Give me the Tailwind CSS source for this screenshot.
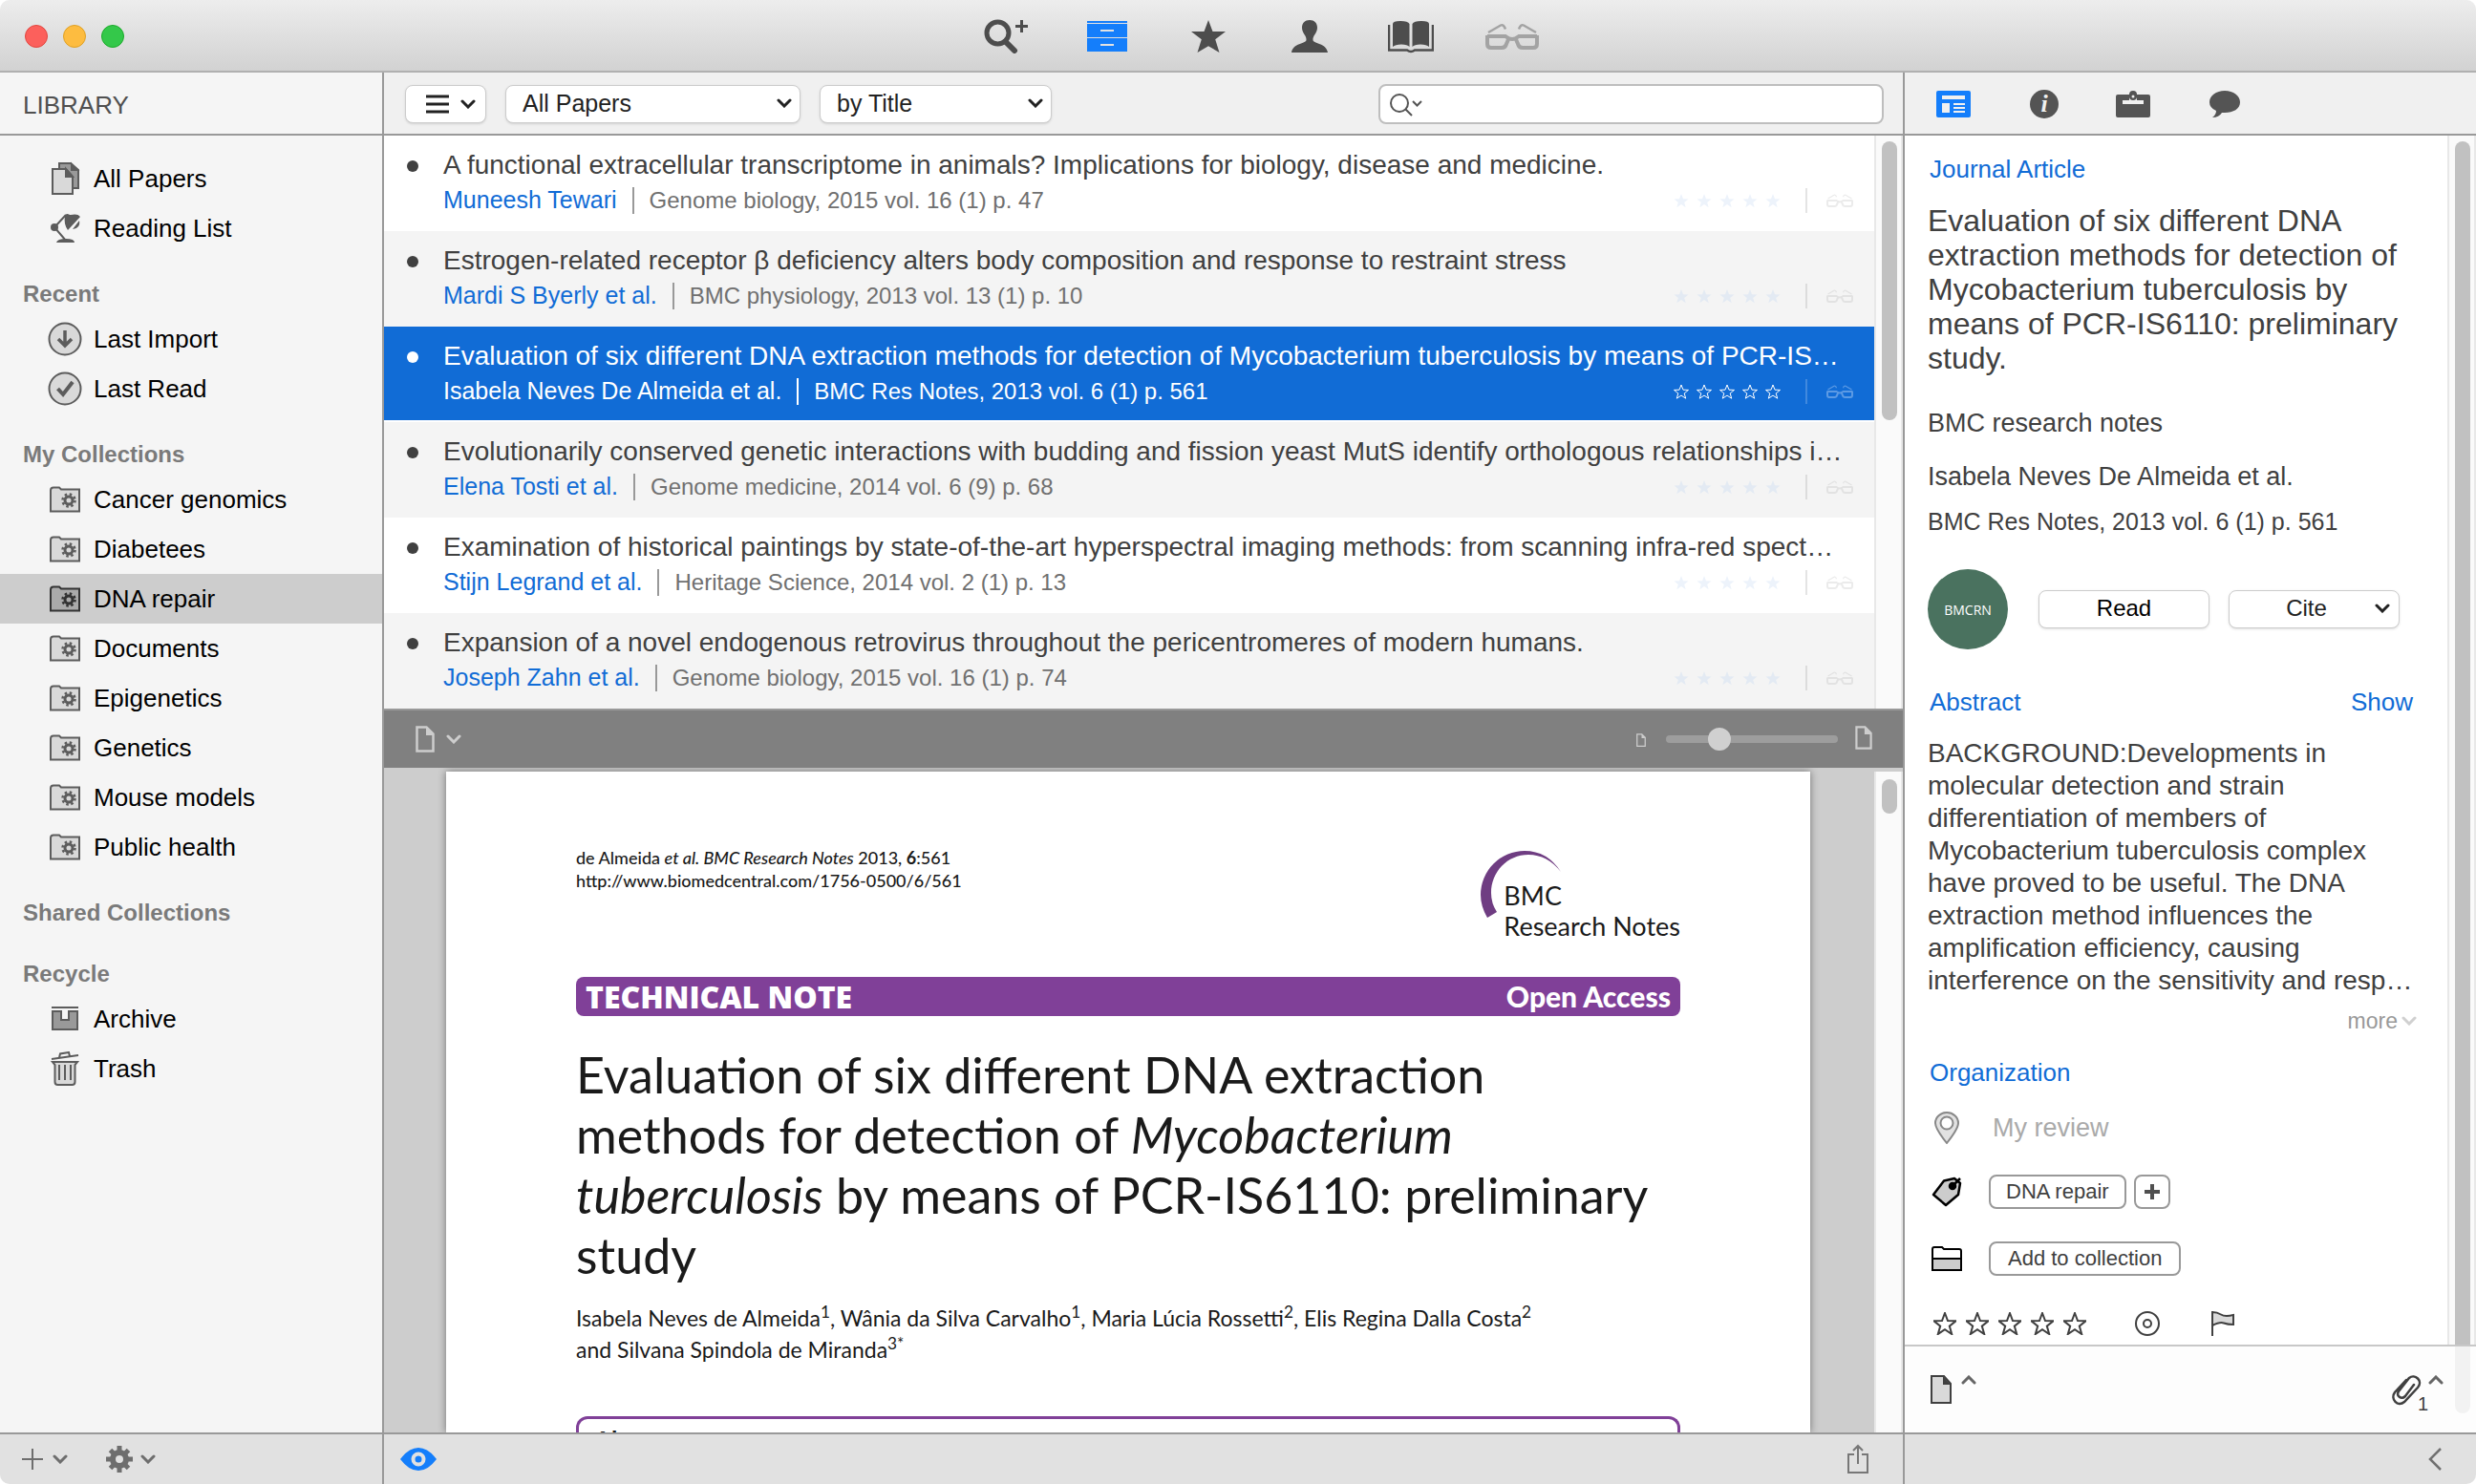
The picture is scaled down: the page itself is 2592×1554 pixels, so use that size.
<!DOCTYPE html>
<html lang="en">

<head>
    <meta charset="UTF-8">
    <meta name="viewport" content="width=device-width, initial-scale=1.0">
    <title>Papers - Library</title>
    <script src="https://cdn.jsdelivr.net/npm/@tailwindcss/browser@4"></script>
</head>

<body class="bg-white font-['Liberation_Sans',Arial,sans-serif] text-[#404040]">

    <!-- Shared icons -->
    <svg class="hidden" aria-hidden="true">
        <symbol id="chevron" viewBox="0 0 16 10">
            <path d="M2 2l6 6 6-6" fill="none" stroke="currentColor" stroke-width="3" stroke-linecap="round" />
        </symbol>
        <symbol id="star" viewBox="0 0 24 24">
            <path d="M12 1l3 8 8.500.3-6.700 5.300 2.400 8.400L12 18.100 4.800 23l2.400-8.400L.5 9.300 9 9z" />
        </symbol>
        <symbol id="rating" viewBox="0 0 112 16">
            <path id="s" d="M8 1l2 5.200 5.500.200-4.300 3.500 1.500 5.300L8 12.100 3.300 15.200l1.500-5.300L.5 6.400 6 6.200z" />
            <use href="#s" x="24" />
            <use href="#s" x="48" />
            <use href="#s" x="72" />
            <use href="#s" x="96" />
        </symbol>
        <symbol id="glasses" viewBox="0 0 56 28">
            <g fill="none" stroke="currentColor">
                <path d="M2 14h19q4 3 7 3t7-3h19" stroke-width="4" />
                <path d="M2 13v9q0 4 4 4h11q4 0 5-4l3-7M54 13v9q0 4-4 4H39q-4 0-5-4l-3-7" stroke-width="4" />
                <path d="M3 10L16 2.500q3-1.500 5 4M53 10L40 2.500q-3-1.500-5 4" stroke-width="2.500" />
            </g>
        </symbol>
        <symbol id="folder" viewBox="0 0 36 36">
            <path d="M3 8.500q0-3 3-3h6l2 2h19v23H3z" fill="var(--fill, #d9d9d9)" stroke="currentColor" stroke-width="2" />
            <circle cx="22" cy="19" r="4" fill="none" stroke="currentColor" stroke-width="3" />
            <circle cx="22" cy="19" r="6.500" fill="none" stroke="currentColor" stroke-width="2.500" stroke-dasharray="2.500 2.600" />
        </symbol>
        <symbol id="page" viewBox="0 0 20 28">
            <path d="M1.500 1.500h10l7 7v18h-17z" fill="none" stroke="currentColor" stroke-width="2.500" />
            <path d="M11 1v9h8z" fill="currentColor" />
        </symbol>
    </svg>

    <div class="flex h-screen flex-col overflow-hidden rounded-[10px] bg-[#f5f5f5]">

        <!-- Title bar -->
        <header class="flex h-[76px] flex-none items-center border-b-2 border-[#b0b0b0] bg-linear-to-b from-[#ededed] to-[#d2d2d2] pt-[2px] pr-[87px] pl-[26px]">
            <div class="flex gap-4">
                <button aria-label="Close" class="size-6 rounded-full border border-[#e2463f] bg-[#fc605c]"></button>
                <button aria-label="Minimize" class="size-6 rounded-full border border-[#dfa023] bg-[#fdbc40]"></button>
                <button aria-label="Zoom" class="size-6 rounded-full border border-[#1aab29] bg-[#34c84a]"></button>
            </div>
            <nav class="mx-auto flex text-[#4d4d4d]">
                <button aria-label="Search" class="flex w-[106px] justify-center">
                    <svg class="h-9 w-[46px]" viewBox="0 0 46 36" fill="none" stroke="currentColor">
                        <circle cx="14.500" cy="14.500" r="11.500" stroke-width="5" />
                        <path d="M22.500 23.500l9.500 9.500" stroke-width="6" stroke-linecap="round" />
                        <path d="M33 7.500h13M39.500 1v13" stroke-width="3" />
                    </svg>
                </button>
                <button aria-label="Library" class="flex w-[106px] justify-center text-[#147efb]">
                    <svg class="h-9 w-[42px]" viewBox="0 0 42 36">
                        <path d="M0 2h42v2H0zM0 5h42v14H0zM0 20h42v14H0z" fill="currentColor" />
                        <path d="M14 11h14v2H14zM14 26h14v2H14z" fill="#e2e2e2" />
                    </svg>
                </button>
                <button aria-label="Favourites" class="flex w-[106px] justify-center">
                    <svg class="size-9 fill-current" viewBox="0 0 36 36">
                        <path d="M18 1l4.500 12H36L25.200 21.200 29.500 35 18 28.200 6.500 35l4.300-13.800L0 13h13.500z" />
                    </svg>
                </button>
                <button aria-label="Authors" class="flex w-[106px] justify-center">
                    <svg class="h-9 w-10 fill-current" viewBox="0 0 40 36">
                        <path d="M20 1c5 0 8 3 8 8 0 6-5 8-4.500 13 .5 4 14 3 15.500 13H1c1.500-10 15-9 15.500-13C17 17 12 15 12 9c0-5 3-8 8-8z" />
                    </svg>
                </button>
                <button aria-label="Journals" class="flex w-[106px] justify-center">
                    <svg class="h-9 w-12" viewBox="0 0 48 36" fill="currentColor">
                        <path d="M5 5q0-3 8-3t9.500 3v24q-2-2.500-8.500-2.500T5 29zM25.500 5q1.500-3 9.500-3t8 3v24q-2.500-2.500-9-2.500T25.500 29z" />
                        <path d="M1 6v26.500h19q4 3 8 0h19V6" fill="none" stroke="currentColor" stroke-width="2.500" />
                    </svg>
                </button>
                <button aria-label="Reader" class="flex w-[106px] items-center justify-center text-[#a3a3a3]">
                    <svg class="h-7 w-14"><use href="#glasses" /></svg>
                </button>
            </nav>
        </header>

        <div class="flex min-h-0 flex-1">

            <!-- Sidebar -->
            <aside class="flex w-[402px] flex-none flex-col border-r-2 border-[#999] text-[#5c5c5c]">
                <h1 class="h-[66px] flex-none border-b-2 border-[#999] pl-6 text-[26px] leading-[68px] text-[#505050]">LIBRARY</h1>
                <div class="flex-1 overflow-hidden pt-[19px]">
                    <a href="#" class="flex h-[52px] items-center gap-3 pl-[50px]">
                        <svg class="size-9" viewBox="0 0 36 36" stroke="currentColor" stroke-width="2">
                            <path d="M12 2h12l8 7v19H12z" fill="#999" />
                            <path d="M5 8h14l7 8v18H5z" fill="#d9d9d9" />
                            <path d="M19 8v8h7zM25 3v6h6z" fill="currentColor" />
                        </svg>
                        <span class="text-[26px] text-black">All Papers</span>
                    </a>
                    <a href="#" class="flex h-[52px] items-center gap-3 pl-[50px]">
                        <svg class="size-9" viewBox="0 0 36 36" fill="currentColor">
                            <path d="M19 4L7 17l12 14" fill="none" stroke="currentColor" stroke-width="2" />
                            <circle cx="7" cy="17" r="4" />
                            <path d="M18 5c2-4 4-1 6-1 4-1 8-1 10 2L21 20c-3-4-4-9-3-15zM33 10c1 5-1 8-7 9zM9 33q1-4 10-4t9 4z" />
                        </svg>
                        <span class="text-[26px] text-black">Reading List</span>
                    </a>

                    <h2 class="h-16 pt-6 pl-6 text-[24px] leading-[38px] font-bold text-[#7a7a7a]">Recent</h2>
                    <a href="#" class="flex h-[52px] items-center gap-3 pl-[50px]">
                        <svg class="size-9" viewBox="0 0 36 36" fill="none" stroke="currentColor">
                            <circle cx="18" cy="18" r="16.500" fill="#d9d9d9" stroke-width="2" />
                            <path d="M18 9v16M11 18l7 7 7-7" stroke-width="3.500" />
                        </svg>
                        <span class="text-[26px] text-black">Last Import</span>
                    </a>
                    <a href="#" class="flex h-[52px] items-center gap-3 pl-[50px]">
                        <svg class="size-9" viewBox="0 0 36 36" fill="none" stroke="currentColor">
                            <circle cx="18" cy="18" r="16.500" fill="#d9d9d9" stroke-width="2" />
                            <path d="M10.500 18l5.500 6 10-13" stroke-width="4" />
                        </svg>
                        <span class="text-[26px] text-black">Last Read</span>
                    </a>

                    <h2 class="h-16 pt-6 pl-6 text-[24px] leading-[38px] font-bold text-[#7a7a7a]">My Collections</h2>
                    <a href="#" class="flex h-[52px] items-center gap-3 pl-[50px]">
                        <svg class="size-9"><use href="#folder" /></svg>
                        <span class="text-[26px] text-black">Cancer genomics</span>
                    </a>
                    <a href="#" class="flex h-[52px] items-center gap-3 pl-[50px]">
                        <svg class="size-9"><use href="#folder" /></svg>
                        <span class="text-[26px] text-black">Diabetees</span>
                    </a>
                    <a href="#" class="flex h-[52px] items-center gap-3 bg-[#cdcdcd] pl-[50px] text-[#333] [--fill:#aaa]">
                        <svg class="size-9"><use href="#folder" /></svg>
                        <span class="text-[26px] text-black">DNA repair</span>
                    </a>
                    <a href="#" class="flex h-[52px] items-center gap-3 pl-[50px]">
                        <svg class="size-9"><use href="#folder" /></svg>
                        <span class="text-[26px] text-black">Documents</span>
                    </a>
                    <a href="#" class="flex h-[52px] items-center gap-3 pl-[50px]">
                        <svg class="size-9"><use href="#folder" /></svg>
                        <span class="text-[26px] text-black">Epigenetics</span>
                    </a>
                    <a href="#" class="flex h-[52px] items-center gap-3 pl-[50px]">
                        <svg class="size-9"><use href="#folder" /></svg>
                        <span class="text-[26px] text-black">Genetics</span>
                    </a>
                    <a href="#" class="flex h-[52px] items-center gap-3 pl-[50px]">
                        <svg class="size-9"><use href="#folder" /></svg>
                        <span class="text-[26px] text-black">Mouse models</span>
                    </a>
                    <a href="#" class="flex h-[52px] items-center gap-3 pl-[50px]">
                        <svg class="size-9"><use href="#folder" /></svg>
                        <span class="text-[26px] text-black">Public health</span>
                    </a>

                    <h2 class="h-16 pt-6 pl-6 text-[24px] leading-[38px] font-bold text-[#7a7a7a]">Shared Collections</h2>

                    <h2 class="h-16 pt-6 pl-6 text-[24px] leading-[38px] font-bold text-[#7a7a7a]">Recycle</h2>
                    <a href="#" class="flex h-[52px] items-center gap-3 pl-[50px]">
                        <svg class="size-9" viewBox="0 0 36 36" stroke="currentColor" stroke-width="2">
                            <path d="M4 6h28" />
                            <path d="M5 10h9v9h8v-9h9v19H5z" fill="#999" />
                        </svg>
                        <span class="text-[26px] text-black">Archive</span>
                    </a>
                    <a href="#" class="flex h-[52px] items-center gap-3 pl-[50px]">
                        <svg class="size-9" viewBox="0 0 36 36" fill="none" stroke="currentColor" stroke-width="2">
                            <path d="M4 8l28-4M12 6.500L13 2.500l9-1.500 1 4" />
                            <path d="M5 11h26l-2.500 3v18q0 3-3 3h-15q-3 0-3-3V14z" fill="#d9d9d9" />
                            <path d="M12 14v16M18 14v16M24 14v16" />
                        </svg>
                        <span class="text-[26px] text-black">Trash</span>
                    </a>
                </div>
                <footer class="flex h-[54px] flex-none items-center border-t-2 border-[#999] bg-[#e1e1e1] pl-[23px] text-[#6e6e6e]">
                    <button aria-label="Add" class="flex items-center gap-[10px]">
                        <svg class="size-[22px]" viewBox="0 0 22 22" stroke="currentColor" stroke-width="2"><path d="M0 11h22M11 0v22" /></svg>
                        <svg class="h-[10px] w-4"><use href="#chevron" /></svg>
                    </button>
                    <button aria-label="Actions" class="ml-10 flex items-center gap-2">
                        <svg class="size-7" viewBox="0 0 28 28" fill="none" stroke="currentColor">
                            <circle cx="14" cy="14" r="7" stroke-width="6" />
                            <path d="M14 0v6M14 22v6M0 14h6M22 14h6M4.500 4.500l4 4M19.500 19.500l4 4M4.500 23.500l4-4M19.500 8.500l4-4" stroke-width="5" />
                        </svg>
                        <svg class="h-[10px] w-4"><use href="#chevron" /></svg>
                    </button>
                </footer>
            </aside>

            <!-- Papers list and reader -->
            <main class="flex min-w-0 flex-1 flex-col">
                <div class="flex h-[66px] flex-none items-center border-b-2 border-[#999] bg-[#f0f0f0] px-5 pt-[2px] text-[#222]">
                    <button aria-label="View options" class="ml-[2px] flex h-10 w-[85px] items-center gap-3 rounded-lg border border-[#ccc] bg-white pl-[21px] shadow-sm">
                        <svg class="h-5 w-6" viewBox="0 0 24 20" stroke="currentColor" stroke-width="3"><path d="M0 2h24M0 10h24M0 18h24" /></svg>
                        <svg class="h-[10px] w-4"><use href="#chevron" /></svg>
                    </button>
                    <div class="relative ml-5 w-[309px]">
                        <select aria-label="Filter" class="h-10 w-full appearance-none rounded-lg border border-[#ccc] bg-white pb-1 pl-[17px] text-[25px] shadow-sm">
                            <option>All Papers</option>
                        </select>
                        <svg class="pointer-events-none absolute top-[14px] right-[9px] h-[10px] w-4"><use href="#chevron" /></svg>
                    </div>
                    <div class="relative ml-5 w-[243px]">
                        <select aria-label="Sort" class="h-10 w-full appearance-none rounded-lg border border-[#ccc] bg-white pb-1 pl-[17px] text-[25px] shadow-sm">
                            <option>by Title</option>
                        </select>
                        <svg class="pointer-events-none absolute top-[14px] right-[9px] h-[10px] w-4"><use href="#chevron" /></svg>
                    </div>
                    <div class="relative ml-auto w-[529px]">
                        <input type="search" aria-label="Search papers" class="block h-[42px] w-full rounded-lg border-2 border-[#bebebe] bg-white pl-12 text-[25px]">
                        <svg class="pointer-events-none absolute top-[10px] left-3 h-6 w-[34px] text-[#555]" viewBox="0 0 34 24" fill="none" stroke="currentColor" stroke-width="2">
                            <circle cx="10" cy="10" r="9" />
                            <path d="M16 16l7 7M24 8l4.500 4.500L33 8" />
                        </svg>
                    </div>
                </div>

                <div class="flex h-[600px] flex-none">
                    <ul class="min-w-0 flex-1 overflow-hidden bg-white whitespace-nowrap">
                        <li class="flex h-[100px] gap-[26px] pt-3 pr-[22px] pl-6">
                            <span class="mt-[14px] size-3 flex-none rounded-full bg-[#404040]"></span>
                            <div class="min-w-0 flex-1">
                                <h3 class="text-[28px] leading-[38px]">A functional extracellular transcriptome in animals? Implications for biology, disease and medicine.</h3>
                                <p class="flex h-9 items-center text-[24px] text-[#707070]">
                                    <a href="#" class="text-[25px] text-[#116cd6]">Muneesh Tewari</a>
                                    <span class="mx-4 h-7 w-[2px] bg-[#999]"></span>
                                    Genome biology, 2015 vol. 16 (1) p. 47
                                    <svg class="ml-auto h-4 w-[112px] fill-[#edf3fb]"><use href="#rating" /></svg>
                                    <span class="mr-5 ml-[26px] h-[26px] w-[2px] bg-[#e4e4e4]"></span>
                                    <svg class="h-[14px] w-7 text-[#ebebeb]"><use href="#glasses" /></svg>
                                </p>
                            </div>
                        </li>
                        <li class="flex h-[100px] gap-[26px] bg-[#f4f4f4] pt-3 pr-[22px] pl-6">
                            <span class="mt-[14px] size-3 flex-none rounded-full bg-[#404040]"></span>
                            <div class="min-w-0 flex-1">
                                <h3 class="text-[28px] leading-[38px]">Estrogen-related receptor β deficiency alters body composition and response to restraint stress</h3>
                                <p class="flex h-9 items-center text-[24px] text-[#707070]">
                                    <a href="#" class="text-[25px] text-[#116cd6]">Mardi S Byerly et al.</a>
                                    <span class="mx-4 h-7 w-[2px] bg-[#999]"></span>
                                    BMC physiology, 2013 vol. 13 (1) p. 10
                                    <svg class="ml-auto h-4 w-[112px] fill-[#e3eaf3]"><use href="#rating" /></svg>
                                    <span class="mr-5 ml-[26px] h-[26px] w-[2px] bg-[#dcdcdc]"></span>
                                    <svg class="h-[14px] w-7 text-[#e2e2e2]"><use href="#glasses" /></svg>
                                </p>
                            </div>
                        </li>
                        <li class="flex h-[100px] gap-[26px] border-b-2 border-white bg-[#116cd6] pt-3 pr-[22px] pl-6 text-white">
                            <span class="mt-[14px] size-3 flex-none rounded-full bg-white"></span>
                            <div class="min-w-0 flex-1">
                                <h3 class="text-[28px] leading-[38px]">Evaluation of six different DNA extraction methods for detection of Mycobacterium tuberculosis by means of PCR-IS…</h3>
                                <p class="flex h-9 items-center text-[24px]">
                                    <a href="#" class="text-[25px]">Isabela Neves De Almeida et al.</a>
                                    <span class="mx-4 h-7 w-[2px] bg-white"></span>
                                    BMC Res Notes, 2013 vol. 6 (1) p. 561
                                    <svg class="ml-auto h-4 w-[112px] fill-none stroke-white"><use href="#rating" /></svg>
                                    <span class="mr-5 ml-[26px] h-[26px] w-[2px] bg-[#4189de]"></span>
                                    <svg class="h-[14px] w-7 text-[#5c9ae4]"><use href="#glasses" /></svg>
                                </p>
                            </div>
                        </li>
                        <li class="flex h-[100px] gap-[26px] bg-[#f4f4f4] pt-3 pr-[22px] pl-6">
                            <span class="mt-[14px] size-3 flex-none rounded-full bg-[#404040]"></span>
                            <div class="min-w-0 flex-1">
                                <h3 class="text-[28px] leading-[38px]">Evolutionarily conserved genetic interactions with budding and fission yeast MutS identify orthologous relationships i…</h3>
                                <p class="flex h-9 items-center text-[24px] text-[#707070]">
                                    <a href="#" class="text-[25px] text-[#116cd6]">Elena Tosti et al.</a>
                                    <span class="mx-4 h-7 w-[2px] bg-[#999]"></span>
                                    Genome medicine, 2014 vol. 6 (9) p. 68
                                    <svg class="ml-auto h-4 w-[112px] fill-[#e3eaf3]"><use href="#rating" /></svg>
                                    <span class="mr-5 ml-[26px] h-[26px] w-[2px] bg-[#dcdcdc]"></span>
                                    <svg class="h-[14px] w-7 text-[#e2e2e2]"><use href="#glasses" /></svg>
                                </p>
                            </div>
                        </li>
                        <li class="flex h-[100px] gap-[26px] pt-3 pr-[22px] pl-6">
                            <span class="mt-[14px] size-3 flex-none rounded-full bg-[#404040]"></span>
                            <div class="min-w-0 flex-1">
                                <h3 class="text-[28px] leading-[38px]">Examination of historical paintings by state-of-the-art hyperspectral imaging methods: from scanning infra-red spect…</h3>
                                <p class="flex h-9 items-center text-[24px] text-[#707070]">
                                    <a href="#" class="text-[25px] text-[#116cd6]">Stijn Legrand et al.</a>
                                    <span class="mx-4 h-7 w-[2px] bg-[#999]"></span>
                                    Heritage Science, 2014 vol. 2 (1) p. 13
                                    <svg class="ml-auto h-4 w-[112px] fill-[#edf3fb]"><use href="#rating" /></svg>
                                    <span class="mr-5 ml-[26px] h-[26px] w-[2px] bg-[#e4e4e4]"></span>
                                    <svg class="h-[14px] w-7 text-[#ebebeb]"><use href="#glasses" /></svg>
                                </p>
                            </div>
                        </li>
                        <li class="flex h-[100px] gap-[26px] bg-[#f4f4f4] pt-3 pr-[22px] pl-6">
                            <span class="mt-[14px] size-3 flex-none rounded-full bg-[#404040]"></span>
                            <div class="min-w-0 flex-1">
                                <h3 class="text-[28px] leading-[38px]">Expansion of a novel endogenous retrovirus throughout the pericentromeres of modern humans.</h3>
                                <p class="flex h-9 items-center text-[24px] text-[#707070]">
                                    <a href="#" class="text-[25px] text-[#116cd6]">Joseph Zahn et al.</a>
                                    <span class="mx-4 h-7 w-[2px] bg-[#999]"></span>
                                    Genome biology, 2015 vol. 16 (1) p. 74
                                    <svg class="ml-auto h-4 w-[112px] fill-[#e3eaf3]"><use href="#rating" /></svg>
                                    <span class="mr-5 ml-[26px] h-[26px] w-[2px] bg-[#dcdcdc]"></span>
                                    <svg class="h-[14px] w-7 text-[#e2e2e2]"><use href="#glasses" /></svg>
                                </p>
                            </div>
                        </li>
                    </ul>
                    <div class="w-[30px] flex-none border-x-2 border-[#e8e8e8] bg-[#fafafa] px-[6px] pt-[6px]">
                        <div class="h-[292px] w-4 rounded-full bg-[#c1c1c1]"></div>
                    </div>
                </div>

                <!-- Reader toolbar -->
                <div class="flex h-[62px] flex-none items-center border-t-2 border-[#999] bg-[#808080] pr-8 pl-[33px] text-[#cdcdcd]">
                    <button aria-label="Page layout" class="flex items-center gap-3">
                        <svg class="h-7 w-5"><use href="#page" /></svg>
                        <svg class="h-[10px] w-4"><use href="#chevron" /></svg>
                    </button>
                    <svg class="mt-[2px] mr-[21px] ml-auto h-[14px] w-[10px]"><use href="#page" /></svg>
                    <input type="range" aria-label="Page zoom" min="0" max="100" value="28"
                        class="h-2 w-[180px] appearance-none rounded-full bg-[#9d9d9d] [&::-webkit-slider-thumb]:size-6 [&::-webkit-slider-thumb]:appearance-none [&::-webkit-slider-thumb]:rounded-full [&::-webkit-slider-thumb]:bg-[#d0d0d0]">
                    <svg class="mb-1 ml-[18px] h-[25px] w-[18px]"><use href="#page" /></svg>
                </div>

                <!-- Article -->
                <div class="flex min-h-0 flex-1 overflow-hidden bg-[#cdcdcd] pt-1">
                    <article class="ml-[65px] mr-[67px] min-w-0 flex-1 bg-white px-[136px] pt-[78px] font-['Lato','Open_Sans',sans-serif] text-[#1a1a1a] shadow-[0_0_8px_rgba(0,0,0,0.45)]">
                        <div class="flex h-[137px] justify-between">
                            <p class="text-[18px] leading-6 font-medium">
                                de Almeida <em>et al. BMC Research Notes</em> 2013, <b>6</b>:561<br>
                                http://www.biomedcentral.com/1756-0500/6/561
                            </p>
                            <div class="relative pt-9 pl-6 text-[27px] leading-8">
                                <svg class="absolute top-[5px] left-0 h-[70px] w-[84px]" viewBox="0 0 84 70">
                                    <path d="M7 70Q0 58 0 46A46 46 0 0 1 46 0Q70 0 84 22Q70 4 50 4C28 4 11 22 11 44Q11 55 17 64z" fill="#6f3d82" />
                                </svg>
                                BMC<br>Research Notes
                            </div>
                        </div>
                        <div class="flex h-[41px] items-center justify-between rounded-lg bg-[#804098] px-[10px] text-[30px] font-black text-white">
                            <span class="font-['Open_Sans',sans-serif] text-[32px] font-extrabold">TECHNICAL NOTE</span>
                            <span>Open Access</span>
                        </div>
                        <h2 class="mt-[30px] text-[52px] leading-[63px]">Evaluation of six different DNA extraction<br>methods for detection of <em>Mycobacterium<br>tuberculosis</em> by means of PCR-IS6110: preliminary<br>study</h2>
                        <p class="mt-[18px] text-[23px] leading-[33px] [&_sup]:leading-none">Isabela Neves de Almeida<sup>1</sup>, Wânia da Silva Carvalho<sup>1</sup>, Maria Lúcia Rossetti<sup>2</sup>, Elis Regina Dalla Costa<sup>2</sup><br>and Silvana Spindola de Miranda<sup>3*</sup></p>
                        <section class="mt-[53px] rounded-t-xl border-[3px] border-b-0 border-[#804098] px-4">
                            <h3 class="text-[26px] leading-[44px] font-bold">Abstract</h3>
                        </section>
                    </article>
                    <div class="w-[30px] flex-none border-x-2 border-[#e8e8e8] bg-[#fafafa] px-[6px] pt-2">
                        <div class="h-9 w-4 rounded-full bg-[#c1c1c1]"></div>
                    </div>
                </div>

                <footer class="flex h-[54px] flex-none items-center justify-between border-t-2 border-[#999] bg-[#e1e1e1] pr-[35px] pl-[17px]">
                    <button aria-label="Preview">
                        <svg class="h-6 w-[38px]" viewBox="0 0 38 24">
                            <path d="M0 12Q9 0 19 0t19 12Q29 24 19 24T0 12z" fill="#147efb" />
                            <circle cx="19" cy="12" r="5.500" fill="none" stroke="#e1e1e1" stroke-width="4" />
                        </svg>
                    </button>
                    <button aria-label="Share">
                        <svg class="h-8 w-6" viewBox="0 0 24 32" fill="none" stroke="#777" stroke-width="2">
                            <path d="M8 11H2v19h20V11h-6M12 21V2M7 7l5-5 5 5" />
                        </svg>
                    </button>
                </footer>
            </main>

            <!-- Inspector -->
            <aside class="flex w-[600px] flex-none flex-col border-l-2 border-[#999] bg-white">
                <nav class="flex h-[66px] flex-none items-center border-b-2 border-[#999] bg-[#f0f0f0] pt-[2px] pl-[33px] text-[#545454]">
                    <button aria-label="Overview">
                        <svg class="h-7 w-9" viewBox="0 0 36 28">
                            <rect width="36" height="28" rx="2" fill="#147efb" />
                            <path d="M6 5h24v4H6zM6 13h8v10H6zM18 13h12v2H18zM18 17h12v2H18zM18 21h12v2H18z" fill="#f0f0f0" />
                        </svg>
                    </button>
                    <button aria-label="Info" class="ml-[62px] size-[30px] rounded-full bg-[#545454] font-['Liberation_Serif',serif] text-[26px] leading-[30px] font-bold text-[#f0f0f0] italic">i</button>
                    <button aria-label="Notes" class="ml-[60px]">
                        <svg class="h-7 w-9" viewBox="0 0 36 28" fill="currentColor">
                            <path d="M2 4h12q0-4 4-4t4 4h12q2 0 2 2v20q0 2-2 2H2q-2 0-2-2V6q0-2 2-2z" />
                            <path d="M7 14v-4h7V7h8v3h7v4z" fill="#f0f0f0" />
                            <circle cx="18" cy="6" r="4" />
                            <circle cx="18" cy="6" r="1.500" fill="#f0f0f0" />
                        </svg>
                    </button>
                    <button aria-label="Comments" class="ml-[62px]">
                        <svg class="h-[30px] w-8" viewBox="0 0 32 30" fill="currentColor">
                            <path d="M16 1c9 0 16 5 16 12S25 24 16 24h-3q-3 5-10 5 4-3 4-7Q0 19 0 13C0 6 7 1 16 1z" />
                        </svg>
                    </button>
                </nav>

                <div class="flex min-h-0 flex-1">
                    <div class="min-w-0 flex-1 overflow-hidden pt-[17px] pr-8 pl-6">
                        <p class="pl-[2px] text-[26px] leading-9 text-[#116cd6]">Journal Article</p>
                        <h2 class="mt-[18px] text-[32px] leading-9">Evaluation of six different DNA extraction methods for detection of Mycobacterium tuberculosis by means of PCR-IS6110: preliminary study.</h2>
                        <p class="mt-8 text-[27px] leading-9">BMC research notes</p>
                        <p class="mt-5 text-[27px] leading-9">Isabela Neves De Almeida et al.</p>
                        <p class="mt-[11px] text-[25px] leading-9">BMC Res Notes, 2013 vol. 6 (1) p. 561</p>
                        <div class="mt-8 flex items-center text-[#222]">
                            <span class="flex size-[84px] items-center justify-center rounded-full bg-[#4a725f] font-['Open_Sans',sans-serif] text-[14px] text-white">BMCRN</span>
                            <button class="ml-8 h-10 w-[179px] rounded-lg border border-[#ccc] bg-white pb-1 text-[24px] text-black shadow-sm">Read</button>
                            <button class="relative ml-5 h-10 w-[179px] rounded-lg border border-[#ccc] bg-white pr-4 pb-1 text-[24px] shadow-sm">Cite
                                <svg class="absolute top-[13px] right-[9px] h-[10px] w-4"><use href="#chevron" /></svg>
                            </button>
                        </div>
                        <div class="mt-[37px] flex justify-between pr-1 pl-[2px] text-[26px] leading-9 text-[#116cd6]">
                            <h3>Abstract</h3>
                            <a href="#">Show</a>
                        </div>
                        <p class="mt-[19px] text-[28px] leading-[34px]">BACKGROUND:Developments in molecular detection and strain differentiation of members of Mycobacterium tuberculosis complex have proved to be useful. The DNA extraction method influences the amplification efficiency, causing interference on the sensitivity and resp…</p>
                        <button class="mt-[7px] ml-auto flex items-center gap-1 text-[23px] leading-9 text-[#999]">more
                            <svg class="h-[10px] w-4 text-[#d0d0d0]"><use href="#chevron" /></svg>
                        </button>
                        <h3 class="mt-[18px] pl-[2px] text-[26px] leading-9 text-[#116cd6]">Organization</h3>
                        <div class="mt-[22px] flex h-9 items-center pl-[7px]">
                            <svg class="h-[34px] w-[26px]" viewBox="0 0 26 34" stroke="#888" stroke-width="2">
                                <path d="M13 33Q1 18 1 12a12 11 0 0 1 24 0Q25 18 13 33z" fill="#e2e2e2" />
                                <circle cx="13" cy="12" r="6.500" fill="#fff" />
                            </svg>
                            <input type="text" aria-label="My review" placeholder="My review" class="ml-[35px] min-w-0 flex-1 text-[27px] leading-9 placeholder:text-[#aaa]">
                        </div>
                        <div class="mt-[31px] flex h-9 items-center gap-2 pl-1">
                            <svg class="mr-5 size-8" viewBox="0 0 32 32" stroke="#000" stroke-width="2.500" stroke-linejoin="round">
                                <path d="M13 4.500L24 2l6 5-2 12-13 11L2 19z" fill="#ccc" />
                                <circle cx="22" cy="10" r="3" fill="#000" />
                                <path d="M22 10l8-8" />
                            </svg>
                            <button class="h-9 rounded-lg border-2 border-[#999] px-4 text-[22px] leading-8">DNA repair</button>
                            <button aria-label="Add keyword" class="flex h-9 w-[38px] items-center justify-center rounded-lg border-2 border-[#999]">
                                <svg class="size-4" viewBox="0 0 16 16" stroke="#505050" stroke-width="4"><path d="M0 8h16M8 0v16" /></svg>
                            </button>
                        </div>
                        <div class="mt-[34px] flex h-9 items-center gap-2 pl-1">
                            <svg class="mr-5 h-[26px] w-8" viewBox="0 0 32 26" fill="none" stroke="#000" stroke-width="2">
                                <path d="M1 13h30v12H1z" fill="#ccc" />
                                <path d="M1 25V3q0-2 2-2h8l2 2h16q2 0 2 2v20z" />
                            </svg>
                            <button class="h-9 rounded-lg border-2 border-[#999] px-[18px] text-[22px] leading-8">Add to collection</button>
                        </div>
                        <div class="mt-9 flex h-7 items-center gap-[10px] pl-[6px] text-[#404040]">
                            <button aria-label="1 star"><svg class="size-6 overflow-visible fill-none stroke-current stroke-2"><use href="#star" /></svg></button>
                            <button aria-label="2 stars"><svg class="size-6 overflow-visible fill-none stroke-current stroke-2"><use href="#star" /></svg></button>
                            <button aria-label="3 stars"><svg class="size-6 overflow-visible fill-none stroke-current stroke-2"><use href="#star" /></svg></button>
                            <button aria-label="4 stars"><svg class="size-6 overflow-visible fill-none stroke-current stroke-2"><use href="#star" /></svg></button>
                            <button aria-label="5 stars"><svg class="size-6 overflow-visible fill-none stroke-current stroke-2"><use href="#star" /></svg></button>
                            <button aria-label="Color label" class="ml-[41px]">
                                <svg class="size-[26px]" viewBox="0 0 26 26" fill="none" stroke="currentColor" stroke-width="2">
                                    <circle cx="13" cy="13" r="12" />
                                    <circle cx="13" cy="13" r="4" />
                                </svg>
                            </button>
                            <button aria-label="Flag" class="ml-[44px]">
                                <svg class="h-[26px] w-6" viewBox="0 0 24 26" stroke="currentColor" stroke-width="2">
                                    <path d="M1 1q5 0 9 2.500t13 .5v10q-6 0-10-1.500T1 15z" fill="#d9d9d9" />
                                    <path d="M1 0v26" />
                                </svg>
                            </button>
                        </div>
                    </div>
                    <div class="w-[30px] flex-none border-x-2 border-[#e8e8e8] bg-[#fafafa] px-[6px] pt-[6px]">
                        <div class="h-full w-4 rounded-t-full bg-[#c1c1c1]"></div>
                    </div>
                </div>

                <div class="flex h-[92px] flex-none border-t-2 border-[#c8c8c8] bg-[#fdfdfd] text-[#404040]">
                    <div class="flex flex-1 items-start pt-[30px] pr-1 pl-[27px]">
                        <button aria-label="Document" class="flex items-start gap-[10px]">
                            <svg class="h-[30px] w-[22px]" viewBox="0 0 22 30">
                                <path d="M1 1h13l7 8v20H1z" fill="#d9d9d9" stroke="currentColor" stroke-width="2" />
                                <path d="M13 1v9h8z" fill="currentColor" />
                            </svg>
                            <svg class="h-[10px] w-4 rotate-180 text-[#666]"><use href="#chevron" /></svg>
                        </button>
                        <button aria-label="Attachments" class="ml-auto flex items-start">
                            <svg class="h-[32px] w-8" viewBox="0 0 32 32" fill="none" stroke="currentColor" stroke-width="2.500" stroke-linecap="round">
                                <path d="M16 5L4 18c-5 7 3 16 10 10L28 13c6-7-3-15-9-10L8 17c-3 5 3 9 7 5l9-12" />
                            </svg>
                            <span class="-ml-1 pt-5 text-[20px] leading-5">1</span>
                            <svg class="h-[10px] w-4 rotate-180 text-[#666]"><use href="#chevron" /></svg>
                        </button>
                    </div>
                    <div class="w-[30px] flex-none px-2">
                        <div class="h-[70px] w-4 rounded-b-full bg-[#f2f2f2]"></div>
                    </div>
                </div>

                <footer class="flex h-[54px] flex-none items-center justify-end border-t-2 border-[#999] bg-[#e1e1e1] pr-9">
                    <button aria-label="Hide inspector">
                        <svg class="h-6 w-[14px]" viewBox="0 0 14 24" fill="none" stroke="#707070" stroke-width="2.500"><path d="M13 1L2 12l11 11" /></svg>
                    </button>
                </footer>
            </aside>
        </div>
    </div>

</body>

</html>
